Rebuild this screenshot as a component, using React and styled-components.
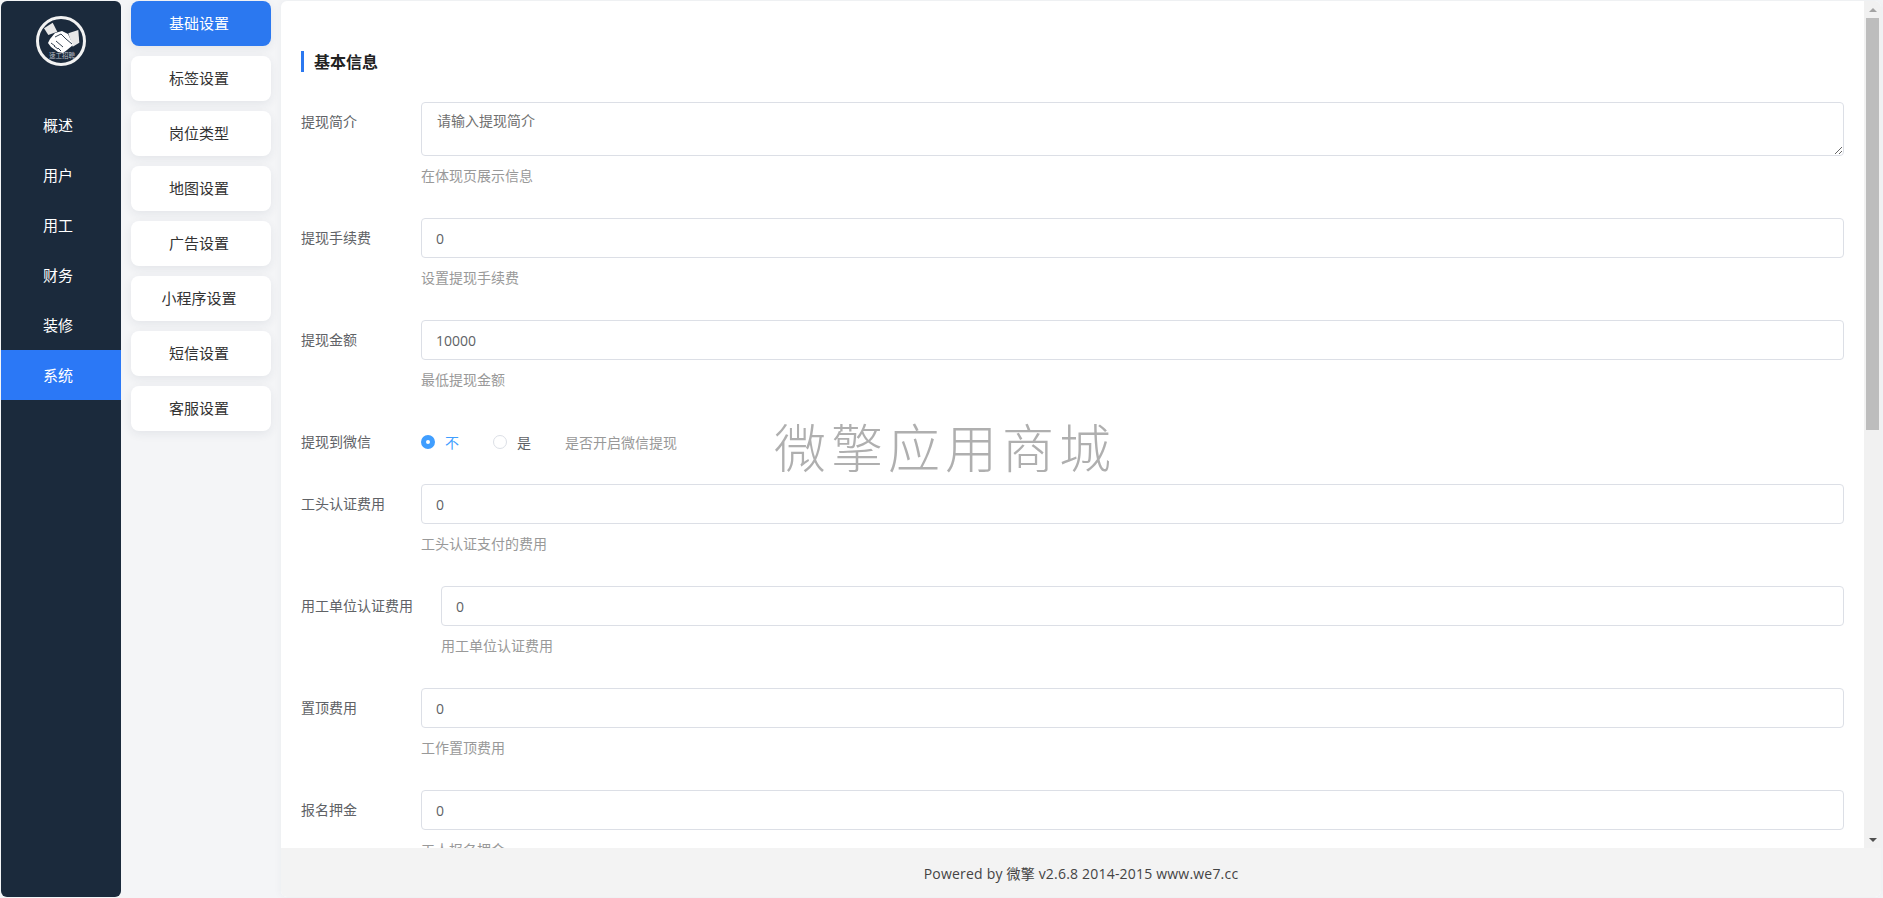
import React from "react";
import styled, { createGlobalStyle } from "styled-components";

const Global = createGlobalStyle`
  html, body { margin: 0; height: 100%; overflow: hidden; background: #f4f5f7; }
  body, input, textarea { font-family: "Open Sans", "Noto Sans CJK SC", sans-serif; }
  *, *::before, *::after { box-sizing: border-box; }
`;

const Page = styled.div`
  display: flex;
  gap: 10px;
  width: 1883px;
  height: 898px;
  padding: 1px 2px 1px 1px;
  font-size: 14px;
`;

const Sidebar = styled.nav`
  flex: 0 0 120px;
  background: #1b2a3c;
  border-radius: 6px;
  display: flex;
  flex-direction: column;
`;

const LogoWrap = styled.div`
  height: 99px;
  display: flex;
  justify-content: center;
  padding-top: 15px;
`;

const NavItem = styled.div`
  height: 50px;
  display: flex;
  align-items: center;
  justify-content: center;
  padding: 0 6px 2px 0;
  font-size: 15px;
  color: #fff;
  background: ${(p) => (p.$active ? "#2b78f6" : "transparent")};
`;

const TabColumn = styled.div`
  flex: 0 0 140px;
  display: flex;
  flex-direction: column;
  gap: 10px;
`;

const TabItem = styled.div`
  height: 45px;
  border-radius: 8px;
  display: flex;
  align-items: center;
  justify-content: center;
  padding: 0 4px 2px 0;
  font-size: 15px;
  background: ${(p) => (p.$active ? "#2b78f0" : "#fff")};
  color: ${(p) => (p.$active ? "#fff" : "#333")};
  box-shadow: 0 3px 10px rgba(40, 50, 80, 0.08);
`;

const Main = styled.main`
  flex: 1;
  min-width: 0;
  display: flex;
  flex-direction: column;
  background: #fff;
  border-radius: 6px;
  overflow: hidden;
  position: relative;
  box-shadow: 0 0 8px rgba(40, 50, 80, 0.05);
`;

const Body = styled.div`
  flex: 1;
  min-height: 0;
  display: flex;
`;

const Content = styled.div`
  flex: 1;
  min-width: 0;
  overflow: hidden;
  padding: 50px 20px 0;
`;

const Scrollbar = styled.div`
  flex: 0 0 17px;
  background: #f1f1f1;
  display: flex;
  flex-direction: column;
  align-items: center;
`;

const ScrollArrow = styled.div`
  flex: 0 0 17px;
  display: flex;
  align-items: center;
  justify-content: center;
  &::before {
    content: "";
    border-left: 4px solid transparent;
    border-right: 4px solid transparent;
    ${(p) => (p.$down ? "border-top: 4px solid #505050;" : "border-bottom: 4px solid #a3a3a3;")}
  }
`;

const ScrollThumb = styled.div`
  width: 13px;
  height: 412px;
  background: #bdbdbd;
`;

const ScrollRest = styled.div`
  flex: 1;
`;

const SectionTitle = styled.h2`
  margin: 0 0 30px;
  height: 21px;
  display: flex;
  align-items: center;
  border-left: 3px solid #2b78f0;
  padding: 0 0 2px 10px;
  font-size: 16px;
  font-weight: 600;
  color: #222;
`;

const FormItem = styled.div`
  display: flex;
  margin-bottom: 22px;
`;

const Label = styled.label`
  flex: 0 0 auto;
  min-width: 120px;
  padding-right: 28px;
  line-height: 40px;
  height: 40px;
  color: #606266;
`;

const Field = styled.div`
  flex: 1;
  min-width: 0;
`;

const TextInput = styled.input`
  display: block;
  width: 100%;
  height: 40px;
  padding: 0 15px 0 14px;
  border: 1px solid #dcdfe6;
  border-radius: 4px;
  outline: none;
  font-size: 14px;
  color: #606266;
  background: #fff;
`;

const TextArea = styled.textarea`
  display: block;
  width: 100%;
  height: 54px;
  padding: 7px 15px 5px;
  border: 1px solid #dcdfe6;
  border-radius: 4px;
  outline: none;
  resize: vertical;
  font-size: 14px;
  line-height: 21px;
  color: #606266;
  &::placeholder { color: #707070; opacity: 1; }
`;

const Hint = styled.div`
  line-height: 40px;
  height: 40px;
  color: #999;
`;

const RadioRow = styled.div`
  display: flex;
  align-items: center;
  height: 40px;
  gap: 34px;
`;

const Radio = styled.span`
  display: flex;
  align-items: center;
  gap: 10px;
  color: ${(p) => (p.$checked ? "#409eff" : "#606266")};
  &::before {
    content: "";
    width: 14px;
    height: 14px;
    border-radius: 50%;
    border: ${(p) => (p.$checked ? "5px solid #409eff" : "1px solid #dcdfe6")};
    background: #fff;
  }
`;

const RadioHint = styled.span`
  color: #999;
`;

const Footer = styled.footer`
  flex: 0 0 49px;
  background: #f3f3f3;
  display: flex;
  align-items: center;
  justify-content: center;
  letter-spacing: 0.2px;
  color: #444;
`;

const Watermark = styled.div`
  position: absolute;
  left: 493px;
  top: 411px;
  font-size: 52px;
  line-height: 72px;
  letter-spacing: 5px;
  font-weight: 300;
  color: rgba(110, 110, 110, 0.55);
  white-space: nowrap;
  pointer-events: none;
`;

const Logo = () => (
  <svg width="50" height="50" viewBox="0 0 50 50">
    <circle cx="25" cy="25" r="23.5" fill="none" stroke="#f2f2f2" strokeWidth="3" />
    <path d="M8 12.3l8.7-5.6 4.6 9-9 3.3z" fill="#e8e8e8" />
    <path d="M32.3 17.3l10-3.3 1 12.7-6.6 4z" fill="#e8e8e8" />
    <path d="M19 17l7-2 6 3 5 11-6 5-4 3-5-1-7-5-3-4 2-4z" fill="#fff" />
    <path d="M19 21l6-3 5 5 6 5" fill="none" stroke="#1b2a3c" strokeWidth="0.9" />
    <path d="M15 27l4 3M18 30l4 3M22 32l3 3M20 25l7 6" fill="none" stroke="#1b2a3c" strokeWidth="0.9" />
    <text x="26" y="41.5" textAnchor="middle" fontSize="6.5" fill="#b9bdc2" fontFamily="Noto Sans CJK SC">速工招聘</text>
  </svg>
);

const navs = ["概述", "用户", "用工", "财务", "装修", "系统"];
const tabs = ["基础设置", "标签设置", "岗位类型", "地图设置", "广告设置", "小程序设置", "短信设置", "客服设置"];
const fieldsA = [
  { label: "提现手续费", value: "0", hint: "设置提现手续费" },
  { label: "提现金额", value: "10000", hint: "最低提现金额" },
];
const fieldsB = [
  { label: "工头认证费用", value: "0", hint: "工头认证支付的费用" },
  { label: "用工单位认证费用", value: "0", hint: "用工单位认证费用" },
  { label: "置顶费用", value: "0", hint: "工作置顶费用" },
  { label: "报名押金", value: "0", hint: "工人报名押金" },
];

const InputItem = ({ label, value, hint }) => (
  <FormItem>
    <Label>{label}</Label>
    <Field>
      <TextInput defaultValue={value} />
      <Hint>{hint}</Hint>
    </Field>
  </FormItem>
);

export default function App() {
  return (
    <Page>
      <Global />
      <Sidebar>
        <LogoWrap><Logo /></LogoWrap>
        {navs.map((n) => (
          <NavItem key={n} $active={n === "系统"}>{n}</NavItem>
        ))}
      </Sidebar>
      <TabColumn>
        {tabs.map((t, i) => (
          <TabItem key={t} $active={i === 0}>{t}</TabItem>
        ))}
      </TabColumn>
      <Main>
        <Body>
          <Content>
            <SectionTitle>基本信息</SectionTitle>
            <FormItem>
              <Label>提现简介</Label>
              <Field>
                <TextArea placeholder="请输入提现简介" />
                <Hint>在体现页展示信息</Hint>
              </Field>
            </FormItem>
            {fieldsA.map((f) => <InputItem key={f.label} {...f} />)}
            <FormItem>
              <Label>提现到微信</Label>
              <RadioRow>
                <Radio $checked>不</Radio>
                <Radio>是</Radio>
                <RadioHint>是否开启微信提现</RadioHint>
              </RadioRow>
            </FormItem>
            {fieldsB.map((f) => <InputItem key={f.label} {...f} />)}
          </Content>
          <Scrollbar>
            <ScrollArrow />
            <ScrollThumb />
            <ScrollRest />
            <ScrollArrow $down />
          </Scrollbar>
        </Body>
        <Footer>Powered by 微擎 v2.6.8 2014-2015 www.we7.cc</Footer>
        <Watermark>微擎应用商城</Watermark>
      </Main>
    </Page>
  );
}
